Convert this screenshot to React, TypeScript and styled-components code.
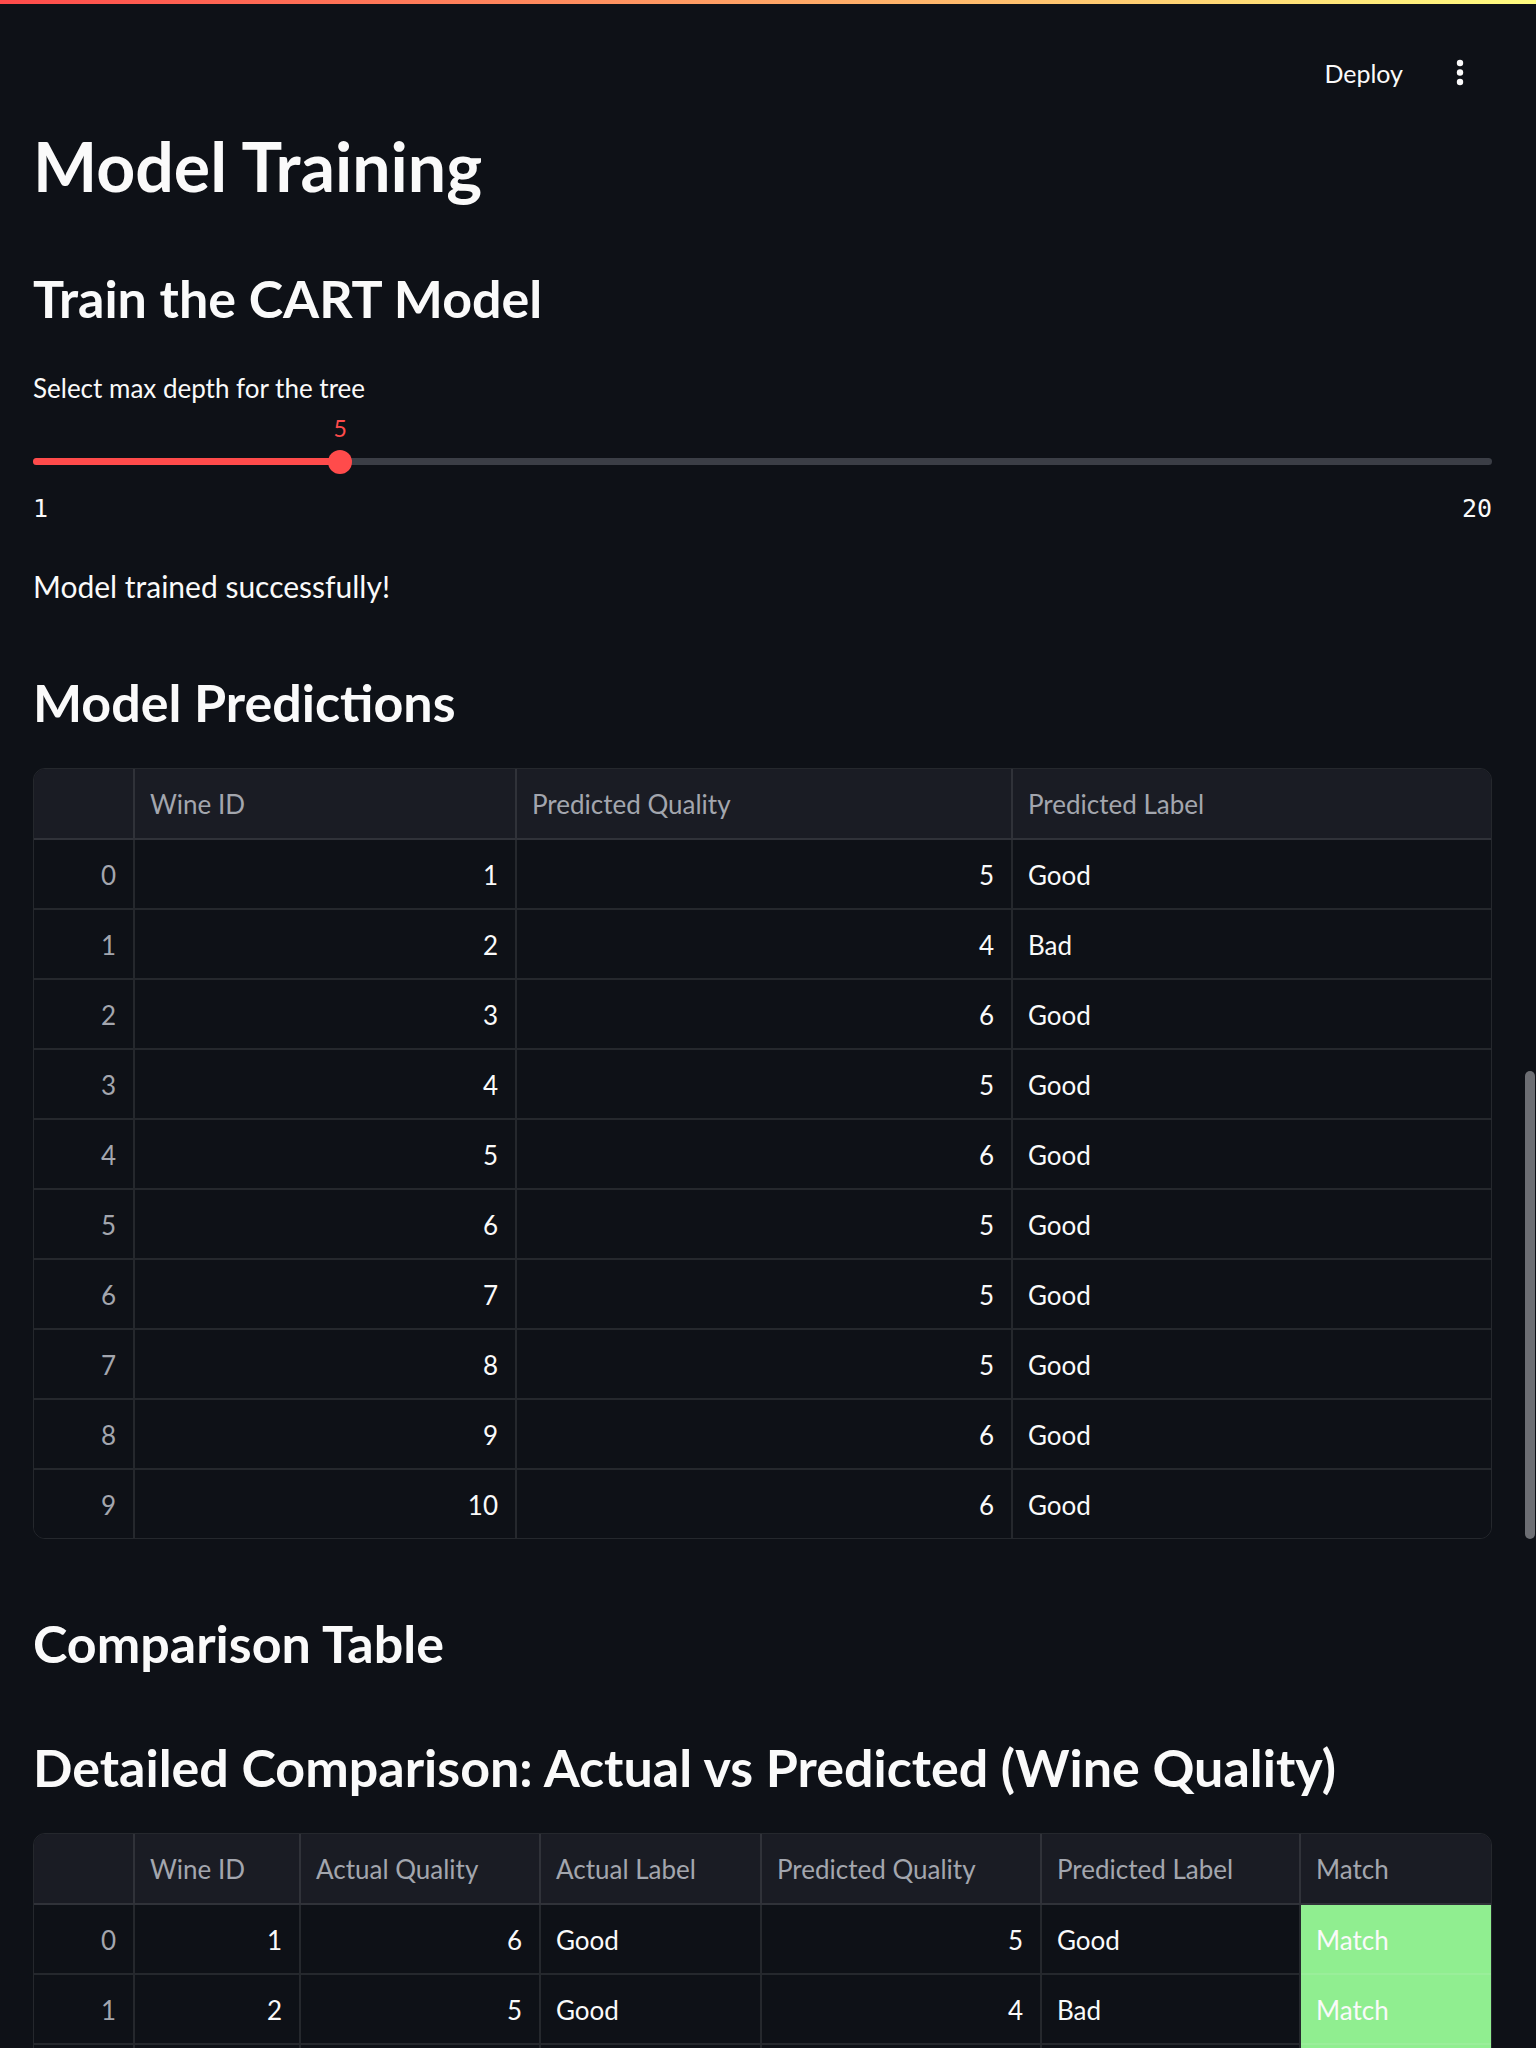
import styled, { createGlobalStyle } from "styled-components";

const GlobalStyle = createGlobalStyle`
    html, body {
        margin: 0;
        padding: 0;
        background: #0e1117;
        overflow: hidden;
    }
    body {
        font-family: Lato, "Noto Sans", sans-serif;
        color: #fafafa;
    }
`;

const Page = styled.div`
    height: 2048px;
    overflow: hidden;
    position: relative;
`;

const Decoration = styled.div`
    height: 4px;
    background: linear-gradient(90deg, #ff4b4b, #fffd80);
`;

const Toolbar = styled.header`
    display: flex;
    justify-content: flex-end;
    align-items: flex-start;
    gap: 49px;
    height: 104px;
    box-sizing: border-box;
    padding: 52px 68px 0 0;
`;

const DeployButton = styled.button`
    background: none;
    border: 0;
    padding: 0;
    color: #fafafa;
    font: 400 25px/34px Lato, sans-serif;
    cursor: pointer;
`;

const MenuButton = styled.button`
    background: none;
    border: 0;
    padding: 0;
    width: 16px;
    height: 34px;
    cursor: pointer;
    svg {
        display: block;
    }
`;

const Main = styled.main`
    padding: 0 44px 0 33px;
`;

const Title = styled.h1`
    margin: 17.7px 0 0;
    font: 700 68px/80px Lato, sans-serif;
`;

const Heading = styled.h2<{ $gap: number }>`
    margin: ${(p) => p.$gap}px 0 0;
    font: 700 52px/64px Lato, sans-serif;
`;

const SliderLabel = styled.div`
    margin-top: 42px;
    font: 400 26px/32px Lato, sans-serif;
`;

const SliderBox = styled.div`
    position: relative;
    margin-top: 46.1px;
    height: 24px;
`;

const Rail = styled.div`
    position: absolute;
    left: 0;
    right: 0;
    top: 50%;
    height: 7px;
    margin-top: -3.5px;
    border-radius: 4px;
    background: #3b3e46;
`;

const RailFill = styled(Rail)`
    right: auto;
    background: #ff4b4b;
`;

const Thumb = styled.div`
    position: absolute;
    top: 0;
    width: 24px;
    height: 24px;
    border-radius: 50%;
    background: #ff4b4b;
    transform: translateX(-50%);
`;

const ThumbValue = styled.div`
    position: absolute;
    bottom: calc(100% + 8px);
    transform: translateX(-50%);
    color: #ff4b4b;
    font: 400 23px/28px Lato, sans-serif;
`;

const TickRow = styled.div`
    display: flex;
    justify-content: space-between;
    margin-top: 20.3px;
    font: 400 25px/30px "DejaVu Sans Mono", monospace;
`;

const Message = styled.p`
    margin: 44.1px 0 0;
    font: 400 30px/36px Lato, sans-serif;
`;

const Table = styled.div<{ $gap: number }>`
    margin-top: ${(p) => p.$gap}px;
    border: 1px solid rgba(250, 250, 250, 0.1);
    border-radius: 12px;
    overflow: hidden;
`;

const Row = styled.div<{ $cols: string; $head?: boolean }>`
    display: grid;
    grid-template-columns: ${(p) => p.$cols};
    background: ${(p) => (p.$head ? "#1a1c24" : "#0e1117")};
`;

const Cell = styled.div<{ $align?: "left" | "right"; $muted?: boolean; $bg?: string; $head?: boolean }>`
    height: ${(p) => (p.$head ? 67 : 66)}px;
    line-height: ${(p) => (p.$head ? 67 : 66)}px;
    padding: 2px 17px 0 15px;
    font-size: 26px;
    text-align: ${(p) => p.$align ?? "left"};
    color: ${(p) => (p.$muted ? "#a3a6ae" : "#fafafa")};
    background: ${(p) => p.$bg ?? "transparent"};
    border-right: 2px solid rgba(250, 250, 250, 0.1);
    border-bottom: 2px solid rgba(250, 250, 250, 0.1);
    white-space: nowrap;
    overflow: hidden;
    &:last-child {
        border-right: 0;
    }
    ${Row}:last-child > & {
        border-bottom: 0;
    }
`;

const Scrollbar = styled.div`
    position: fixed;
    top: 1071px;
    right: 1px;
    width: 10px;
    height: 468px;
    border-radius: 5px;
    background: #6c6e73;
`;

const predictions = [
    { id: 1, quality: 5, label: "Good" },
    { id: 2, quality: 4, label: "Bad" },
    { id: 3, quality: 6, label: "Good" },
    { id: 4, quality: 5, label: "Good" },
    { id: 5, quality: 6, label: "Good" },
    { id: 6, quality: 5, label: "Good" },
    { id: 7, quality: 5, label: "Good" },
    { id: 8, quality: 5, label: "Good" },
    { id: 9, quality: 6, label: "Good" },
    { id: 10, quality: 6, label: "Good" },
];

const actual = [
    { quality: 6, label: "Good" },
    { quality: 5, label: "Good" },
    { quality: 5, label: "Good" },
    { quality: 6, label: "Good" },
    { quality: 6, label: "Good" },
    { quality: 5, label: "Good" },
    { quality: 5, label: "Good" },
    { quality: 7, label: "Good" },
    { quality: 6, label: "Good" },
    { quality: 5, label: "Good" },
];

const predCols = "101px 382px 496px 1fr";
const compCols = "101px 166px 240px 221px 280px 259px 1fr";

function Kebab() {
    return (
        <svg width="16" height="34" viewBox="0 0 16 34">
            <circle cx="8" cy="7" r="3.2" fill="#fafafa" />
            <circle cx="8" cy="16.5" r="3.2" fill="#fafafa" />
            <circle cx="8" cy="26" r="3.2" fill="#fafafa" />
        </svg>
    );
}

function App() {
    const min = 1;
    const max = 20;
    const depth = 5;
    const pct = ((depth - min) / (max - min)) * 100;

    return (
        <Page>
            <GlobalStyle />
            <Decoration />
            <Toolbar>
                <DeployButton>Deploy</DeployButton>
                <MenuButton aria-label="Main menu">
                    <Kebab />
                </MenuButton>
            </Toolbar>
            <Main>
                <Title>Model Training</Title>
                <Heading $gap={60.2}>Train the CART Model</Heading>
                <SliderLabel>Select max depth for the tree</SliderLabel>
                <SliderBox>
                    <Rail />
                    <RailFill style={{ width: `${pct}%` }} />
                    <Thumb style={{ left: `${pct}%` }} />
                    <ThumbValue style={{ left: `${pct}%` }}>{depth}</ThumbValue>
                </SliderBox>
                <TickRow>
                    <span>{min}</span>
                    <span>{max}</span>
                </TickRow>
                <Message>Model trained successfully!</Message>

                <Heading $gap={65.5}>Model Predictions</Heading>
                <Table $gap={34.1}>
                    <Row $cols={predCols} $head>
                        <Cell $head />
                        <Cell $head $muted>Wine ID</Cell>
                        <Cell $head $muted>Predicted Quality</Cell>
                        <Cell $head $muted>Predicted Label</Cell>
                    </Row>
                    {predictions.map((p, i) => (
                        <Row $cols={predCols} key={p.id}>
                            <Cell $align="right" $muted>{i}</Cell>
                            <Cell $align="right">{p.id}</Cell>
                            <Cell $align="right">{p.quality}</Cell>
                            <Cell>{p.label}</Cell>
                        </Row>
                    ))}
                </Table>

                <Heading $gap={71.9}>Comparison Table</Heading>
                <Heading $gap={60}>Detailed Comparison: Actual vs Predicted (Wine Quality)</Heading>
                <Table $gap={34.1}>
                    <Row $cols={compCols} $head>
                        <Cell $head />
                        <Cell $head $muted>Wine ID</Cell>
                        <Cell $head $muted>Actual Quality</Cell>
                        <Cell $head $muted>Actual Label</Cell>
                        <Cell $head $muted>Predicted Quality</Cell>
                        <Cell $head $muted>Predicted Label</Cell>
                        <Cell $head $muted>Match</Cell>
                    </Row>
                    {predictions.map((p, i) => (
                        <Row $cols={compCols} key={p.id}>
                            <Cell $align="right" $muted>{i}</Cell>
                            <Cell $align="right">{p.id}</Cell>
                            <Cell $align="right">{actual[i].quality}</Cell>
                            <Cell>{actual[i].label}</Cell>
                            <Cell $align="right">{p.quality}</Cell>
                            <Cell>{p.label}</Cell>
                            <Cell $bg="#90ee90">Match</Cell>
                        </Row>
                    ))}
                </Table>
            </Main>
            <Scrollbar />
        </Page>
    );
}

export default App;
